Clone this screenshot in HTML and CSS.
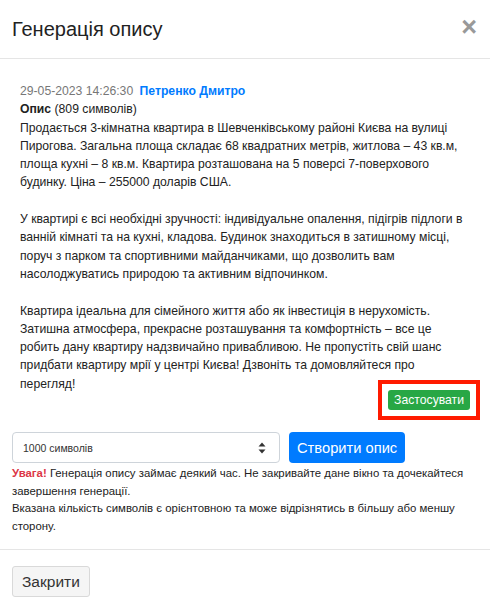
FILE: index.html
```html
<!DOCTYPE html>
<html lang="uk">
<head>
    <meta charset="UTF-8">
    <meta name="viewport" content="width=device-width, initial-scale=1.0">
    <title>Генерація опису</title>
    <link rel="stylesheet" href="styles.css">
</head>
<body>
    <div class="modal">
        <div class="modal-header">
            <h4 class="modal-title">Генерація опису</h4>
            <button class="close" type="button">&times;</button>
        </div>

        <div class="modal-body">
            <div class="result">
                <div class="meta">
                    <span class="date">29-05-2023 14:26:30</span>
                    <span class="author">Петренко Дмитро</span>
                </div>
                <div><b>Опис</b> (809 символів)</div>
                <div class="text">
                    Продається 3-кімнатна квартира в Шевченківському районі Києва на вулиці Пирогова. Загальна площа складає 68 квадратних метрів, житлова – 43 кв.м, площа кухні – 8 кв.м. Квартира розташована на 5 поверсі 7-поверхового будинку. Ціна – 255000 доларів США.<br><br>
                    У квартирі є всі необхідні зручності: індивідуальне опалення, підігрів підлоги в ванній кімнаті та на кухні, кладова. Будинок знаходиться в затишному місці, поруч з парком та спортивними майданчиками, що дозволить вам насолоджуватись природою та активним відпочинком.<br><br>
                    Квартира ідеальна для сімейного життя або як інвестиція в нерухомість. Затишна атмосфера, прекрасне розташування та комфортність – все це робить дану квартиру надзвичайно привабливою. Не пропустіть свій шанс придбати квартиру мрії у центрі Києва! Дзвоніть та домовляйтеся про перегляд!
                </div>
                <div class="apply-row">
                    <span class="highlight">
                        <button class="btn-apply" type="button">Застосувати</button>
                    </span>
                </div>
            </div>

            <div class="controls">
                <div class="select">
                    <span>1000 символів</span>
                    <svg width="8" height="12" viewBox="0 0 8 12">
                        <path d="M4 0.5 L7.5 4.5 L0.5 4.5 Z" fill="#333"/>
                        <path d="M4 11.5 L7.5 7.5 L0.5 7.5 Z" fill="#333"/>
                    </svg>
                </div>
                <button class="btn-primary" type="button">Створити опис</button>
            </div>

            <p class="note">
                <b class="warn">Увага!</b> Генерація опису займає деякий час. Не закривайте дане вікно та дочекайтеся завершення генерації.<br>
                Вказана кількість символів є орієнтовною та може відрізнятись в більшу або меншу сторону.
            </p>
        </div>

        <div class="modal-footer">
            <button class="btn-default" type="button">Закрити</button>
        </div>
    </div>
</body>
</html>
```

FILE: styles.css
```css
body {
    margin: 0;
    padding: 0;
    background-color: #fff;
    color: #222;
    font-family: "Liberation Sans", Arial, sans-serif;
}

.modal {
    width: 490px;
}

.modal-header {
    display: flex;
    align-items: center;
    justify-content: space-between;
    height: 58px;
    padding: 0 12px;
    border-bottom: 1px solid #e5e5e5;
}

.modal-title {
    margin: 0;
    font-size: 20px;
    font-weight: normal;
    color: #222;
}

.close {
    padding: 0;
    border: none;
    background: none;
    font-size: 27px;
    font-weight: bold;
    line-height: 1;
    color: #999;
    margin-top: -4px;
    margin-right: 1px;
}

.modal-body {
    padding: 12px 12px 14px;
}

.result {
    padding: 11px 8px 0;
    font-size: 12.2px;
    line-height: 18.3px;
}

.meta .date {
    color: #777;
}

.meta .author {
    color: #007bff;
    font-weight: bold;
    margin-left: 3px;
}

.apply-row {
    display: flex;
    justify-content: flex-end;
    margin-top: -3px;
}

/* red frame drawn over the screenshot, it takes no room */
.highlight {
    display: flex;
    padding: 6px;
    margin: -10px;
    border: 4px solid #ff1a00;
}

.btn-apply {
    background-color: #28a745;
    color: #fff;
    border: none;
    border-radius: 3px;
    font-family: inherit;
    font-size: 12.2px;
    height: 20px;
    padding: 0 6px;
}

.controls {
    display: flex;
    gap: 9px;
    margin-top: 22px;
}

.select {
    box-sizing: border-box;
    width: 268px;
    height: 31px;
    display: flex;
    align-items: center;
    justify-content: space-between;
    padding: 0 13px 0 10px;
    border: 1px solid #ced4da;
    border-radius: 4px;
    font-size: 10.5px;
    color: #333;
}

.btn-primary {
    height: 31px;
    padding: 0 8px;
    background-color: #007bff;
    color: #fff;
    border: none;
    border-radius: 4px;
    font-family: inherit;
    font-size: 14.7px;
}

.note {
    margin: 2px 0 0;
    font-size: 11.4px;
    line-height: 17.5px;
    color: #222;
}

.warn {
    color: #dc3545;
}

.modal-footer {
    border-top: 1px solid #e5e5e5;
    padding: 16px 12px 12px;
}

.btn-default {
    height: 31px;
    padding: 0 9px;
    background-color: #f5f5f5;
    color: #333;
    border: 1px solid #d9d9d9;
    border-radius: 3px;
    font-family: inherit;
    font-size: 15.5px;
}
```
